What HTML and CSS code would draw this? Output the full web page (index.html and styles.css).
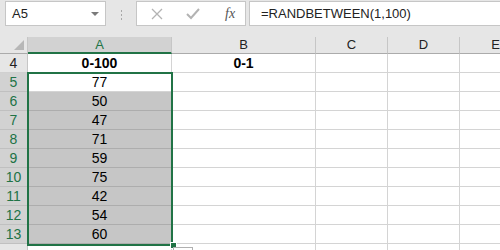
FILE: index.html
```html
<!DOCTYPE html>
<html lang="en">
<head>
    <meta charset="UTF-8">
    <title>RANDBETWEEN</title>
    <link rel="stylesheet" href="styles.css">
</head>
<body>
    <div class="toolbar">
        <div class="name-box">
            <span>A5</span>
            <span class="caret"></span>
        </div>
        <div class="grip">
            <span></span><span></span><span></span>
        </div>
        <div class="fx-tools">
            <svg width="14" height="14" viewBox="0 0 14 14"><path d="M2 2 L12 12 M12 2 L2 12" stroke="#b3b3b3" stroke-width="1.3" fill="none"/></svg>
            <svg width="16" height="14" viewBox="0 0 16 14"><path d="M2 7 L6 11 L14 2" stroke="#b3b3b3" stroke-width="2" fill="none"/></svg>
            <span class="fx">fx</span>
        </div>
        <div class="formula">=RANDBETWEEN(1,100)</div>
    </div>

    <div class="sheet">
        <div class="grid">
            <div class="corner"><span></span></div>
            <div class="col-head active">A</div>
            <div class="col-head">B</div>
            <div class="col-head">C</div>
            <div class="col-head">D</div>
            <div class="col-head">E</div>

            <div class="row-head">4</div>
            <div class="cell bold">0-100</div>
            <div class="cell bold">0-1</div>
            <div class="cell"></div>
            <div class="cell"></div>
            <div class="cell"></div>

            <div class="row-head sel">5</div>
            <div class="cell">77</div>
            <div class="cell"></div><div class="cell"></div><div class="cell"></div><div class="cell"></div>

            <div class="row-head sel">6</div>
            <div class="cell hl">50</div>
            <div class="cell"></div><div class="cell"></div><div class="cell"></div><div class="cell"></div>

            <div class="row-head sel">7</div>
            <div class="cell hl">47</div>
            <div class="cell"></div><div class="cell"></div><div class="cell"></div><div class="cell"></div>

            <div class="row-head sel">8</div>
            <div class="cell hl">71</div>
            <div class="cell"></div><div class="cell"></div><div class="cell"></div><div class="cell"></div>

            <div class="row-head sel">9</div>
            <div class="cell hl">59</div>
            <div class="cell"></div><div class="cell"></div><div class="cell"></div><div class="cell"></div>

            <div class="row-head sel">10</div>
            <div class="cell hl">75</div>
            <div class="cell"></div><div class="cell"></div><div class="cell"></div><div class="cell"></div>

            <div class="row-head sel">11</div>
            <div class="cell hl">42</div>
            <div class="cell"></div><div class="cell"></div><div class="cell"></div><div class="cell"></div>

            <div class="row-head sel">12</div>
            <div class="cell hl">54</div>
            <div class="cell"></div><div class="cell"></div><div class="cell"></div><div class="cell"></div>

            <div class="row-head sel">13</div>
            <div class="cell hl">60</div>
            <div class="cell"></div><div class="cell"></div><div class="cell"></div><div class="cell"></div>

            <div class="row-head"></div>
            <div class="cell"></div>
            <div class="cell"></div><div class="cell"></div><div class="cell"></div><div class="cell"></div>
        </div>
        <div class="selection"></div>
        <div class="handle"></div>
        <div class="fill-tab"></div>
    </div>
</body>
</html>
```

FILE: styles.css
```css
body {
    margin: 0;
    background: #fff;
    font-family: "Liberation Sans", Arial, sans-serif;
    font-size: 13px;
    color: #000;
    overflow: hidden;
    height: 250px;
}
.toolbar {
    display: flex;
    align-items: flex-start;
    height: 37px;
    padding-top: 1px;
    box-sizing: border-box;
    background: #e6e6e6;
}
.name-box {
    display: flex;
    align-items: center;
    justify-content: space-between;
    margin-left: 5px;
    width: 101px;
    height: 25px;
    padding: 0 5px 0 6px;
    box-sizing: border-box;
    background: #fff;
    border: 1px solid #c6c6c6;
    font-size: 13px;
    color: #222;
}
.caret {
    width: 0;
    height: 0;
    border-left: 4px solid transparent;
    border-right: 4px solid transparent;
    border-top: 4px solid #7a7a7a;
    margin-right: 1px;
}
.grip {
    display: flex;
    flex-direction: column;
    gap: 2px;
    margin: 9px 14px 0 15px;
}
.grip span {
    width: 1px;
    height: 2px;
    background: #a8a8a8;
}
.fx-tools {
    display: flex;
    align-items: center;
    width: 110px;
    height: 25px;
    box-sizing: border-box;
    background: #fff;
    border: 1px solid #c6c6c6;
    padding-left: 13px;
    gap: 21px;
}
.fx {
    font-family: "Liberation Serif", serif;
    font-style: italic;
    font-size: 14px;
    color: #555;
    margin-left: 3px;
}
.formula {
    flex: 1;
    height: 25px;
    margin-left: 3px;
    box-sizing: border-box;
    background: #fff;
    border: 1px solid #c6c6c6;
    border-right: none;
    padding: 4px 0 0 11px;
    font-size: 13px;
    color: #222;
}
.sheet {
    position: relative;
    height: 213px;
    width: 500px;
    overflow: hidden;
}
.grid {
    display: grid;
    grid-template-columns: 28px 144px 144px 72px 72px 72px;
    grid-template-rows: 17px repeat(11, 19px);
}
.corner {
    background: #e6e6e6;
    border-right: 1px solid #c6c6c6;
    border-bottom: 1px solid #ababab;
    box-sizing: border-box;
    position: relative;
}
.corner span {
    position: absolute;
    right: 3px;
    bottom: 3px;
    width: 0;
    height: 0;
    border-left: 10px solid transparent;
    border-bottom: 10px solid #b7b7b7;
}
.col-head {
    background: #e6e6e6;
    border-right: 1px solid #c6c6c6;
    border-bottom: 1px solid #ababab;
    box-sizing: border-box;
    text-align: center;
    line-height: 16px;
    color: #222;
}
.col-head.active {
    background: #d2d2d2;
    border-bottom: 2px solid #217346;
    color: #217346;
}
.row-head {
    background: #e6e6e6;
    border-right: 1px solid #c6c6c6;
    border-bottom: 1px solid #d0d0d0;
    box-sizing: border-box;
    text-align: center;
    line-height: 19px;
    font-size: 14px;
    color: #222;
}
.row-head.sel {
    background: #d2d2d2;
    color: #217346;
    border-bottom-color: #c0c0c0;
}
.cell {
    border-right: 1px solid #d4d4d4;
    border-bottom: 1px solid #d4d4d4;
    box-sizing: border-box;
    text-align: center;
    line-height: 19px;
    font-size: 14px;
}
.cell.bold {
    font-weight: bold;
}
.cell.hl {
    background: #c6c6c6;
    border-bottom-color: #adadad;
    border-right-color: #c6c6c6;
}
.selection {
    position: absolute;
    left: 27px;
    top: 35px;
    width: 146px;
    height: 174px;
    box-sizing: border-box;
    border: 2px solid #217346;
}
.handle {
    position: absolute;
    left: 170px;
    top: 205px;
    width: 5px;
    height: 5px;
    background: #217346;
    border: 1px solid #fff;
}
.fill-tab {
    position: absolute;
    left: 173px;
    top: 210px;
    width: 20px;
    height: 6px;
    border-top: 1px solid #b0b0b0;
    border-left: 1px solid #b0b0b0;
    border-right: 1px solid #b0b0b0;
    box-sizing: border-box;
    background: #fff;
}
```
